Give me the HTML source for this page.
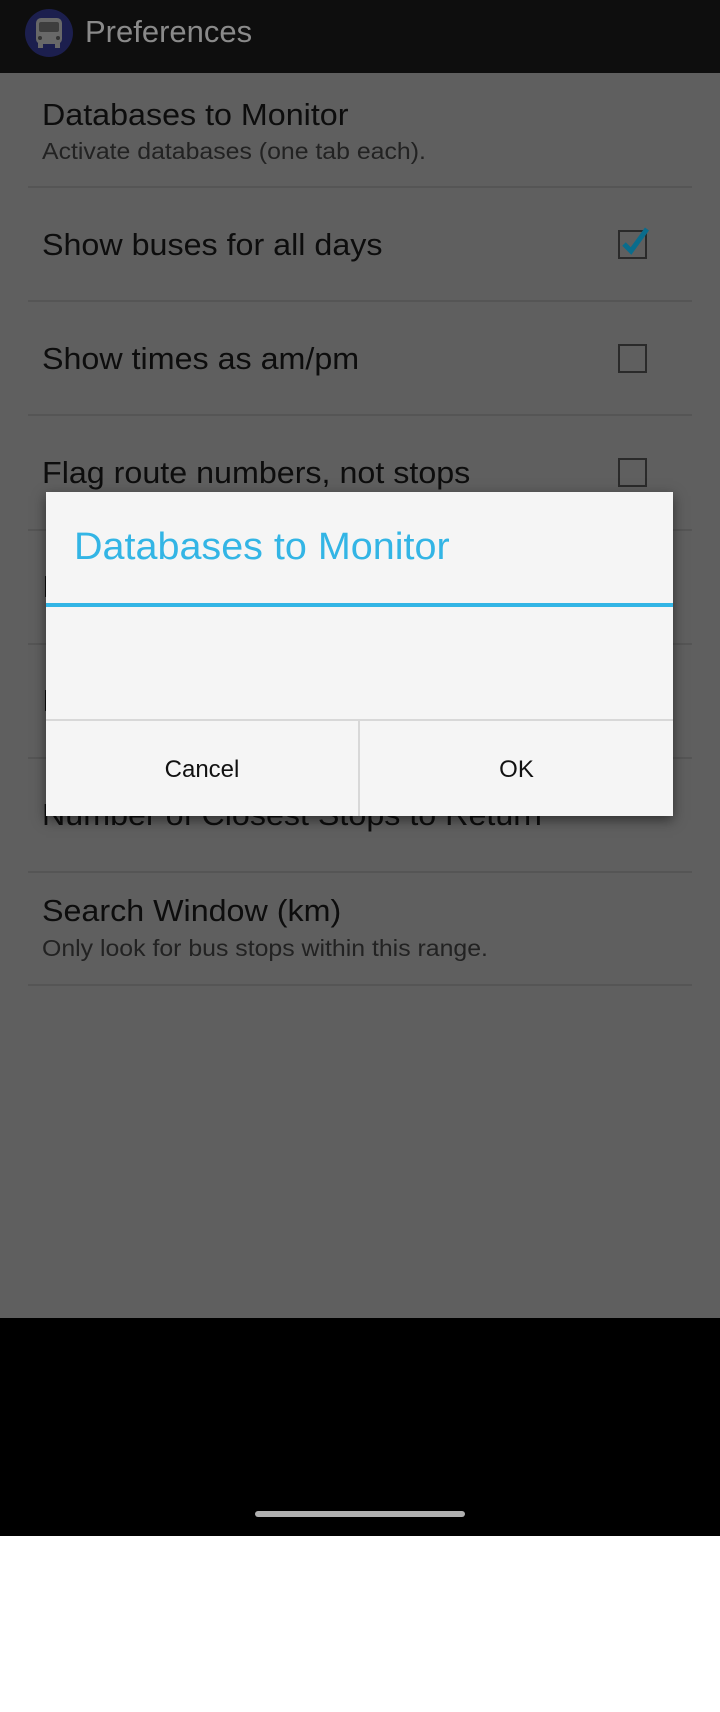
<!DOCTYPE html>
<html><head><meta charset="utf-8"><style>
*{margin:0;padding:0;box-sizing:border-box}
body{width:720px;height:1712px;background:#fff;font-family:"Liberation Sans",sans-serif;position:relative;overflow:hidden}
.abs{position:absolute}
#bar{left:0;top:0;width:720px;height:73px;background:#0e0e0e}
#content{left:0;top:73px;width:720px;height:1245px;background:#5f5f5f}
.t{position:absolute;left:42px;font-size:31px;color:#0d0d0d;white-space:nowrap;transform:scaleX(1.04);transform-origin:left}
.s{position:absolute;left:42px;font-size:23px;color:#222;white-space:nowrap;transform:scaleX(1.08);transform-origin:left}
.d{position:absolute;left:28px;width:664px;height:2px;background:#555}
.cb{position:absolute;left:618px;width:29px;height:29px;border:2px solid #2a2a2a}
</style></head><body>
<div class="abs" id="bar">
<svg class="abs" style="left:24px;top:8px" width="50" height="50" viewBox="0 0 50 50">
<circle cx="25" cy="25" r="24" fill="#1c1f4e"/>
<rect x="12" y="10" width="26" height="26" rx="5" fill="#686868"/>
<rect x="15" y="14" width="20" height="10" rx="2" fill="#3e3e3e"/>
<rect x="14" y="35" width="5" height="5" fill="#686868"/><rect x="31" y="35" width="5" height="5" fill="#686868"/>
<circle cx="16" cy="30" r="2" fill="#333"/><circle cx="34" cy="30" r="2" fill="#333"/>
</svg>
<div class="abs" style="left:85px;top:14px;font-size:31px;color:#8a8a8a">Preferences</div>
</div>
<div class="abs" id="content">
<div class="t" style="top:24px">Databases to Monitor</div>
<div class="s" style="top:65px">Activate databases (one tab each).</div>
<div class="d" style="top:113px"></div>
<div class="t" style="top:154px">Show buses for all days</div>
<div class="cb" style="top:157px"></div>
<svg class="abs" style="left:618px;top:150px" width="36" height="36" viewBox="0 0 36 36"><path d="M6 21 L13 28 L29 6" stroke="#0a6c8c" stroke-width="5" fill="none"/></svg>
<div class="d" style="top:227px"></div>
<div class="t" style="top:268px">Show times as am/pm</div>
<div class="cb" style="top:271px"></div>
<div class="d" style="top:341px"></div>
<div class="t" style="top:382px">Flag route numbers, not stops</div>
<div class="cb" style="top:385px"></div>
<div class="d" style="top:456px"></div>
<div class="t" style="top:496px">Item</div>
<div class="d" style="top:570px"></div>
<div class="t" style="top:610px">Item</div>
<div class="d" style="top:684px"></div>
<div class="t" style="top:724px">Number of Closest Stops to Return</div>
<div class="d" style="top:798px"></div>
<div class="t" style="top:820px">Search Window (km)</div>
<div class="s" style="top:862px">Only look for bus stops within this range.</div>
<div class="d" style="top:911px"></div>
</div>
<div class="abs" style="left:0;top:1318px;width:720px;height:218px;background:#000"></div>
<div class="abs" style="left:255px;top:1511px;width:210px;height:6px;border-radius:3px;background:#b0b0b0"></div>
<div class="abs" style="left:46px;top:492px;width:627px;height:324px;background:#f5f5f5;box-shadow:0 4px 12px rgba(0,0,0,.5)">
<div class="abs" style="left:28px;top:34px;font-size:38px;color:#33b5e5;white-space:nowrap;transform:scaleX(1.04);transform-origin:left">Databases to Monitor</div>
<div class="abs" style="left:0;top:111px;width:627px;height:4px;background:#33b5e5"></div>
<div class="abs" style="left:0;top:227px;width:627px;height:2px;background:#d8d8d8"></div>
<div class="abs" style="left:312px;top:229px;width:2px;height:95px;background:#d8d8d8"></div>
<div class="abs" style="left:0;top:264px;width:312px;text-align:center;font-size:24px;color:#111">Cancel</div>
<div class="abs" style="left:314px;top:264px;width:313px;text-align:center;font-size:24px;color:#111">OK</div>
</div>
</body></html>
